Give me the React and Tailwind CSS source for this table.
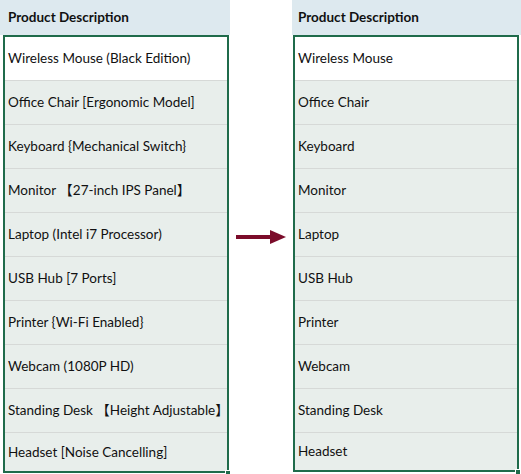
import React from 'react';

const before = [
  'Wireless Mouse (Black Edition)',
  'Office Chair [Ergonomic Model]',
  'Keyboard {Mechanical Switch}',
  'Monitor \u301027-inch IPS Panel\u3011',
  'Laptop (Intel i7 Processor)',
  'USB Hub [7 Ports]',
  'Printer {Wi-Fi Enabled}',
  'Webcam (1080P HD)',
  'Standing Desk \u3010Height Adjustable\u3011',
  'Headset [Noise Cancelling]',
];

const after = [
  'Wireless Mouse',
  'Office Chair',
  'Keyboard',
  'Monitor',
  'Laptop',
  'USB Hub',
  'Printer',
  'Webcam',
  'Standing Desk',
  'Headset',
];

// One spreadsheet column: header cell plus the selected range of rows
function Column({ rows, headerPad, boxMargin, lastHeight, width }) {
  return (
    <div className={`flex flex-col ${width}`}>
      <div className={`h-[35px] bg-[#dde9ef] flex items-center ${headerPad} text-[13.5px] font-bold text-[#111]`}>
        Product Description
      </div>
      <div className={`relative ${boxMargin} w-[226px] border-2 border-[#1f6b4b] flex flex-col`}>
        {rows.map((r, i) => (
          <div
            key={i}
            className={`flex items-center px-[3px] text-[13.5px] text-[#111] whitespace-nowrap ${
              i === rows.length - 1 ? lastHeight : 'h-[44px] border-b border-[#d6d9d7]'
            } ${i === 0 ? 'bg-white' : 'bg-[#e8eeeb]'}`}
          >
            {r}
          </div>
        ))}
        {/* fill handle */}
        <div className="absolute -right-[4px] -bottom-[5px] w-[6px] h-[6px] bg-[#1f6b4b] border border-white" />
      </div>
    </div>
  );
}

export default function App() {
  return (
    <div
      className="w-[521px] h-[474px] bg-white flex overflow-hidden"
      style={{ fontFamily: 'Lato, "Noto Sans CJK SC", sans-serif' }}
    >
      <Column rows={before} headerPad="pl-[8px]" boxMargin="ml-[3px]" lastHeight="h-[38px]" width="w-[230px]" />

      <div className="w-[62px] flex items-center justify-center">
        <svg width="54" height="16" viewBox="0 0 54 16">
          <line x1="2" y1="8" x2="40" y2="8" stroke="#7b0c2a" strokeWidth="4" />
          <polygon points="36,1 52,8 36,15" fill="#7b0c2a" />
        </svg>
      </div>

      <Column rows={after} headerPad="pl-[6px]" boxMargin="ml-px" lastHeight="h-[37px]" width="w-[229px]" />
    </div>
  );
}
